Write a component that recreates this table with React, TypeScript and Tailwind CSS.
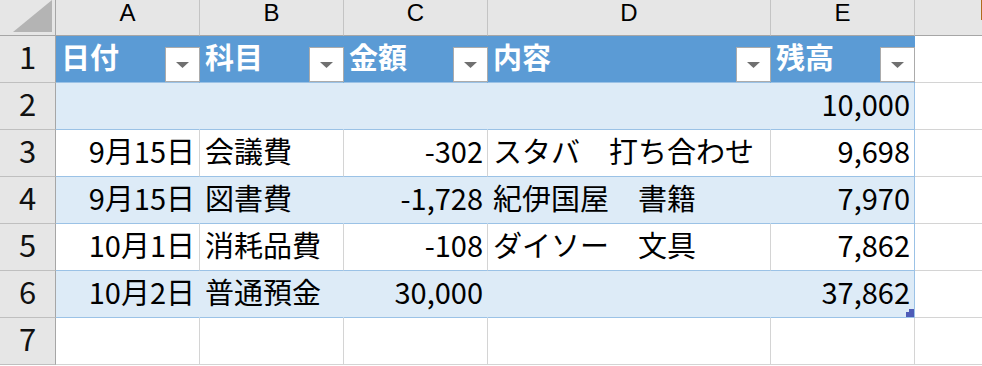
import React from "react";

const COLS = [
  { key: "A", w: "w-[144px]" },
  { key: "B", w: "w-[144px]" },
  { key: "C", w: "w-[144px]" },
  { key: "D", w: "w-[283px]" },
  { key: "E", w: "w-[144px]" },
];

const HEADERS = ["日付", "科目", "金額", "内容", "残高"];

// right-aligned columns: A, C, E
const RIGHT = [true, false, true, false, true];

const ROWS = [
  ["", "", "", "", "10,000"],
  ["9月15日", "会議費", "-302", "スタバ　打ち合わせ", "9,698"],
  ["9月15日", "図書費", "-1,728", "紀伊国屋　書籍", "7,970"],
  ["10月1日", "消耗品費", "-108", "ダイソー　文具", "7,862"],
  ["10月2日", "普通預金", "30,000", "", "37,862"],
];

function RowHead({ n }: { n: number }) {
  return (
    <div className="w-[56px] h-[47px] shrink-0 bg-[#e6e6e6] border-r border-b border-r-[#a6a6a6] border-b-[#bfbfbf] text-center text-[31px] leading-[39px] text-[#111]">
      {n}
    </div>
  );
}

function FilterButton() {
  return (
    <div className="absolute right-[-1px] bottom-0 z-10 w-[35px] h-[35px] bg-white border border-[#ababab] flex items-center justify-center">
      <svg width="13" height="6" viewBox="0 0 13 6">
        <polygon points="0,0 13,0 6.5,6" fill="#707070" />
      </svg>
    </div>
  );
}

export default function App() {
  return (
    <div className="w-[982px] h-[366px] overflow-hidden bg-white font-['Noto_Sans_CJK_JP','Noto_Sans',sans-serif] text-black">
      {/* column letters */}
      <div className="flex h-[36px]">
        <div className="w-[56px] h-[36px] shrink-0 bg-[#e6e6e6] border-r border-b border-[#a6a6a6] flex items-end justify-end pr-[3px] pb-[3px]">
          <svg width="39" height="32" viewBox="0 0 39 32">
            <polygon points="0,32 39,32 39,0" fill="#b4b4b4" />
          </svg>
        </div>
        {COLS.map((c) => (
          <div
            key={c.key}
            className={`${c.w} h-[36px] shrink-0 bg-[#e6e6e6] border-b border-r border-b-[#a6a6a6] border-r-[#c4c4c4] text-center font-['Liberation_Sans',sans-serif] text-[24px] leading-[26px] text-black`}
          >
            {c.key}
          </div>
        ))}
        <div className="relative flex-1 h-[36px] bg-[#e6e6e6] border-b border-[#a6a6a6]">
          <div className="absolute right-0 top-0 w-px h-[20px] bg-[#b06a1e]" />
        </div>
      </div>

      {/* row 1: table header */}
      <div className="flex h-[47px]">
        <RowHead n={1} />
        {COLS.map((c, i) => (
          <div
            key={c.key}
            className={`${c.w} relative h-[47px] shrink-0 bg-[#5b9bd5] border-r border-b border-r-[#5b9bd5] border-b-[#9bc2e6] pl-[5px] text-[29px] leading-[41px] font-bold text-white whitespace-nowrap`}
          >
            {HEADERS[i]}
            <FilterButton />
          </div>
        ))}
        <div className="flex-1 h-[47px] border-b border-[#d4d4d4]" />
      </div>

      {/* rows 2-6 */}
      {ROWS.map((r, ri) => {
        const band = ri % 2 === 0;
        return (
          <div key={ri} className="flex h-[47px]">
            <RowHead n={ri + 2} />
            {COLS.map((c, ci) => {
              const last = ci === COLS.length - 1;
              const right = last
                ? "border-r-[#9bc2e6]"
                : band
                ? "border-r-[#ddebf7]"
                : "border-r-[#d4d4d4]";
              return (
                <div
                  key={c.key}
                  className={`${c.w} h-[47px] shrink-0 border-r border-b border-b-[#9bc2e6] ${right} ${
                    band ? "bg-[#ddebf7]" : "bg-white"
                  } ${RIGHT[ci] ? "text-right pr-[4px]" : "text-left pl-[5px]"} text-[29px] leading-[41px] whitespace-nowrap relative`}
                >
                  {r[ci]}
                  {ri === ROWS.length - 1 && last && (
                    <svg className="absolute right-0 bottom-0" width="8" height="8" viewBox="0 0 8 8">
                      <polygon points="3,0 8,0 8,8 0,8 0,3 3,3" fill="#4e5cb8" />
                    </svg>
                  )}
                </div>
              );
            })}
            <div className="flex-1 h-[47px] border-b border-[#d4d4d4]" />
          </div>
        );
      })}

      {/* row 7 */}
      <div className="flex h-[47px]">
        <RowHead n={7} />
        {COLS.map((c) => (
          <div key={c.key} className={`${c.w} h-[47px] shrink-0 border-r border-b border-[#d4d4d4]`} />
        ))}
        <div className="flex-1 h-[47px] border-b border-[#d4d4d4]" />
      </div>
    </div>
  );
}
